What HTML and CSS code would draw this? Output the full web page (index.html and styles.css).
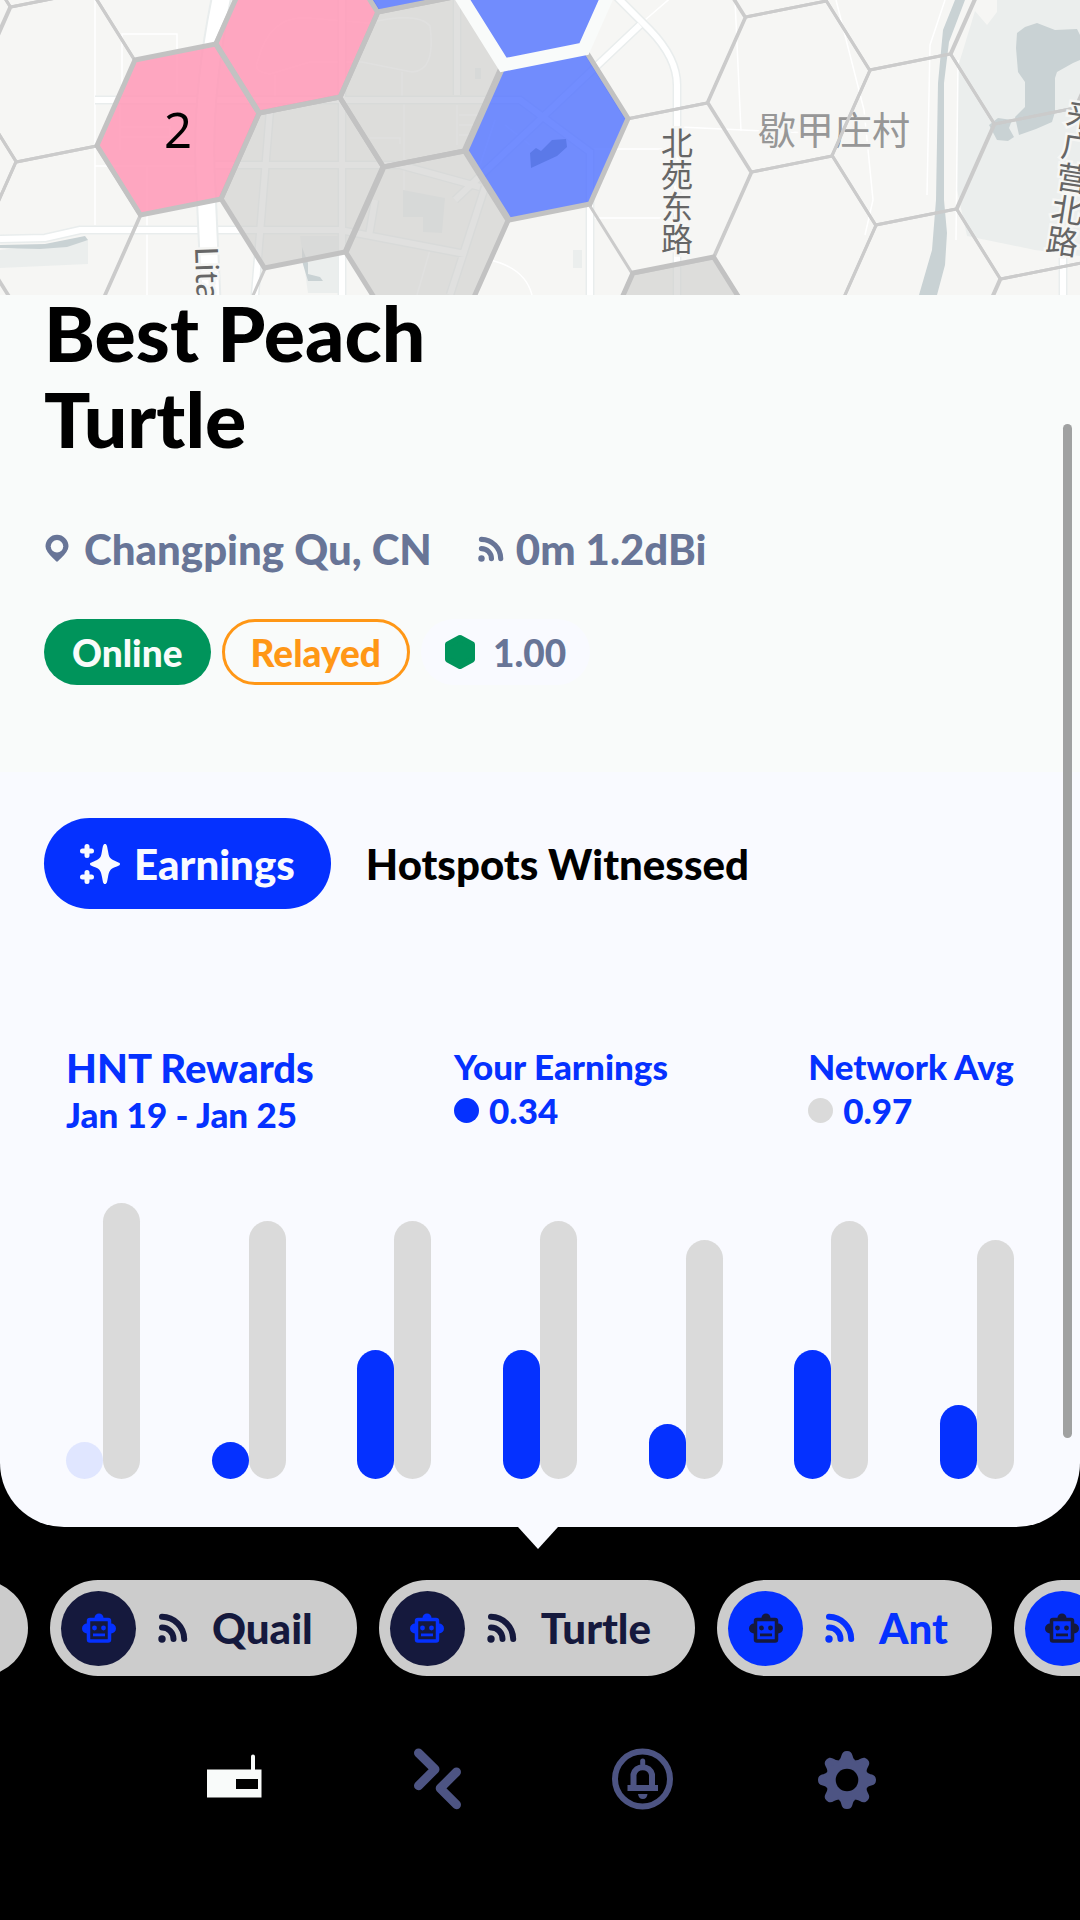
FILE: index.html
```html
<!DOCTYPE html>
<html lang="en">
<head>
  <meta charset="UTF-8">
  <meta name="viewport" content="width=device-width, initial-scale=1.0">
  <title>Best Peach Turtle</title>
  <link rel="stylesheet" href="styles.css">
</head>
<body>
  <svg class="defs" aria-hidden="true">
    <symbol id="rss" viewBox="0 0 30 30">
      <circle cx="4" cy="26" r="3.7" fill="currentColor"/>
      <path d="M4 14.5A11.5 11.5 0 0 1 15.5 26M4 3.8A22.5 22.5 0 0 1 26.2 26" fill="none" stroke="currentColor" stroke-width="6" stroke-linecap="round"/>
    </symbol>
    <symbol id="robot" viewBox="0 0 34 30">
      <path d="M12.500 5a4.500 4.500 0 0 1 9 0zM5 10.500v10a5 5 0 0 1 0-10zM29 10.500v10a5 5 0 0 0 0-10z" fill="currentColor"/>
      <rect x="6.500" y="6.500" width="21" height="21.500" rx="1.500" fill="none" stroke="currentColor" stroke-width="3.500"/>
      <circle cx="12.500" cy="15" r="2.400" fill="currentColor"/>
      <circle cx="21.500" cy="15" r="2.400" fill="currentColor"/>
      <rect x="11" y="20.500" width="12" height="2.800" fill="currentColor"/>
    </symbol>
    <symbol id="plus" viewBox="0 0 14 14">
      <path d="M7 2.500v9M2.500 7h9" stroke="currentColor" stroke-width="5" stroke-linecap="round"/>
    </symbol>
  </svg>

  <svg class="map" viewBox="0 0 1080 295" preserveAspectRatio="xMidYMid slice" role="img" aria-label="Map">
    <defs>
      <path id="hex" d="M-43-70 37.500-86 81-16.500 43 69-37.500 85-81 15.500z"/>
      <path id="tooth" d="M0 0 19.900-8.200C21.500-4.500 29-7 29 0S21.500 4.500 19.900 8.200z"/>
    </defs>

    <!-- parks and water -->
    <path class="park" d="M975 11 987 25 997 12V0h83v256l-45-6-68-14-10-46V70zM0 250l88-10v24L0 268zM300 236h44v57h-36zM573 250h9v18h-9z"/>
    <path class="water" d="M955 0 943 30 938 83 936 200 932 250 919 295H937L945 265 947 233 944 200V83L949 42 965 0z"/>
    <path class="water" d="M1017 33 1025 27 1037 23 1055 30 1077 29 1080 35V60L1073 63 1057 72 1055 78V112L1052 122 1036 129 1019 135 1015 117 1025 107V82L1018 72 1016 48z"/>
    <path class="water" d="M989 125 998 118 1012 120 1009 128 1014 137 1008 141 997 140z"/>
    <path class="water" d="M0 245 45 244 85 236 88 240 67 247 40 249 0 248zM302 247l6 16 0 11 12 3 3 4-15 0-6-20z"/>
    <path class="pond" d="M403 190l42 8-3 35-19-1v-15h-20zM475 68h6v11h-6z"/>

    <!-- small streets -->
    <path class="lane" d="M95 0v225M122 100V34h55v60M95 166h100M147 166v130M120 100v50M735 0l6 131M836 0l28 110 9 90-8 35M945 0l-15 45-3 150M958 60l-2 180M680 127l150 7M594 149h80M590 218h85M645 20l29-25M370 138h30v6M404 100v90M457 105v40M459 115h20M459 125h18M459 135h14M490 260q35 8 42 35M430 250l-13 45M120 127h50v10h-50M258 60q12-45 50-42l60 5q50-12 62 3 6 45-18 46l-50-10-52 0-40 12q-18-2-12-14M275 75v28M402 72v28M495 120l-15 45M505 125l25 20"/>
    <path class="street-edge" d="M0 239 45 238 80 230H340L465 254M95 100H520L590 152V295M208 165H400L480 187M270 110 255 295M342 0v295M375 200l-6 36M457 0v95M485 187 450 295M455 200 640 25M610-10 650 30Q677 58 677 85V295M1063 250v45"/>
    <path class="street" d="M0 239 45 238 80 230H340L465 254M95 100H520L590 152V295M208 165H400L480 187M270 110 255 295M342 0v295M375 200l-6 36M457 0v95M485 187 450 295M455 200 640 25M610-10 650 30Q677 58 677 85V295M1063 250v45"/>
    <path class="avenue-edge" d="M222-5Q200 100 206 190L211 300"/>
    <path class="avenue" d="M222-5Q200 100 206 190L211 300"/>

    <text class="place" x="834" y="144">歇甲庄村</text>

    <g class="cell">
      <use href="#hex" x="-59" y="333"/>
      <use href="#hex" x="-65" y="178"/>
      <use href="#hex" x="-71" y="23"/>
      <use href="#hex" x="59" y="232"/>
      <use href="#hex" x="54" y="77"/>
      <use href="#hex" x="48" y="-78"/>
      <use href="#hex" x="172" y="-25"/>
      <use href="#hex" x="184" y="285"/>
      <use href="#hex" x="664" y="34"/>
      <use href="#hex" x="670" y="189"/>
      <use href="#hex" x="783" y="-68"/>
      <use href="#hex" x="789" y="87"/>
      <use href="#hex" x="795" y="242"/>
      <use href="#hex" x="907" y="-15"/>
      <use href="#hex" x="913" y="140"/>
      <use href="#hex" x="919" y="295"/>
      <use href="#hex" x="1032" y="39"/>
      <use href="#hex" x="1038" y="194"/>
      <use href="#hex" x="1044" y="349"/>
    </g>
    <g class="cell cell-gray">
      <use href="#hex" x="302" y="183"/>
      <use href="#hex" x="421" y="82"/>
      <use href="#hex" x="427" y="237"/>
      <use href="#hex" x="676" y="343"/>
    </g>
    <g class="cell cell-pink">
      <use href="#hex" x="178" y="130"/>
      <use href="#hex" x="297" y="28"/>
    </g>
    <g class="cell cell-blue">
      <use href="#hex" x="415" y="-73"/>
      <use href="#hex" x="547" y="135"/>
      <use class="selected" href="#hex" x="541" y="-20"/>
    </g>
    <path class="pond-blue" d="M530 153 536 148 541 151 552 140 566 139 567 147 557 156 531 168z"/>

    <text class="count" x="178" y="148">2</text>
    <text class="road" x="677" y="127">北苑东路</text>
    <text class="road" transform="translate(1085 99) rotate(9)">来广营北路</text>
    <text class="road-latin" transform="translate(195 247) rotate(88)">Litang</text>
  </svg>

  <main class="sheet">
    <section class="summary">
      <h1 class="name">Best Peach<br>Turtle</h1>
      <div class="meta">
        <span class="meta-item">
          <svg class="pin" viewBox="0 0 24 28"><path d="M12 2a9.500 9.500 0 0 0-9.500 9.500c0 5 5 8.500 9.500 13 4.500-4.500 9.500-8 9.500-13A9.500 9.500 0 0 0 12 2z" fill="currentColor" stroke="currentColor" stroke-width="2.500" stroke-linejoin="round"/><circle class="pin-hole" cx="12" cy="11.500" r="5.800"/></svg>
          Changping Qu, CN
        </span>
        <span class="meta-item meta-antenna">
          <svg class="meta-rss"><use href="#rss"/></svg>
          0m 1.2dBi
        </span>
      </div>
      <div class="badges">
        <span class="badge badge-online">Online</span>
        <span class="badge badge-relayed">Relayed</span>
        <span class="badge badge-scale">
          <svg class="scale-icon" viewBox="0 0 30 34"><path d="M15 3 27 9.500V24.500L15 31 3 24.500V9.500z" fill="currentColor" stroke="currentColor" stroke-width="6" stroke-linejoin="round"/></svg>
          1.00
        </span>
      </div>
    </section>

    <section class="details">
      <div class="tabs">
        <button class="tab active">
          <svg class="sparkle" viewBox="0 0 40 40"><path d="M25 0c2 0 2 2 3 7 1 6 1.500 7 5 9 5 2.500 7 2.500 7 4s-2 2-7 4c-3.500 2-4 4-5 9-1 5-1 7-3 7s-2-2-3-7c-1-5-1.500-7-5-9-5-2-7-2.500-7-4s2-1.500 7-4c3.500-2 4-3 5-9 1-5 1-7 3-7z" fill="currentColor"/><use href="#plus" x="0" y="0" width="14" height="14"/><use href="#plus" x="0" y="26" width="14" height="14"/></svg>
          Earnings
        </button>
        <button class="tab">Hotspots Witnessed</button>
      </div>

      <div class="stats">
        <div class="stat">
          <div class="stat-title">HNT Rewards</div>
          <div class="stat-line">Jan 19 - Jan 25</div>
        </div>
        <div class="stat">
          <div class="stat-line">Your Earnings</div>
          <div class="stat-line"><span class="dot dot-blue"></span>0.34</div>
        </div>
        <div class="stat">
          <div class="stat-line">Network Avg</div>
          <div class="stat-line"><span class="dot"></span>0.97</div>
        </div>
      </div>

      <div class="chart">
        <div class="pair"><div class="bar empty" style="height: 37px"></div><div class="bar avg" style="height: 276px"></div></div>
        <div class="pair"><div class="bar" style="height: 37px"></div><div class="bar avg" style="height: 258px"></div></div>
        <div class="pair"><div class="bar" style="height: 129px"></div><div class="bar avg" style="height: 258px"></div></div>
        <div class="pair"><div class="bar" style="height: 129px"></div><div class="bar avg" style="height: 258px"></div></div>
        <div class="pair"><div class="bar" style="height: 55px"></div><div class="bar avg" style="height: 239px"></div></div>
        <div class="pair"><div class="bar" style="height: 129px"></div><div class="bar avg" style="height: 258px"></div></div>
        <div class="pair"><div class="bar" style="height: 74px"></div><div class="bar avg" style="height: 239px"></div></div>
      </div>
    </section>
    <div class="scroll-thumb"></div>
    <div class="pointer"></div>
  </main>

  <div class="chips">
    <button class="chip chip-prev" aria-label="Previous hotspot"></button>
    <button class="chip">
      <span class="face"><svg class="robot"><use href="#robot"/></svg></span>
      <svg class="chip-rss"><use href="#rss"/></svg>
      Quail
    </button>
    <button class="chip">
      <span class="face"><svg class="robot"><use href="#robot"/></svg></span>
      <svg class="chip-rss"><use href="#rss"/></svg>
      Turtle
    </button>
    <button class="chip chip-blue">
      <span class="face"><svg class="robot"><use href="#robot"/></svg></span>
      <svg class="chip-rss"><use href="#rss"/></svg>
      Ant
    </button>
    <button class="chip chip-blue" aria-label="Next hotspot">
      <span class="face"><svg class="robot"><use href="#robot"/></svg></span>
      <svg class="chip-rss"><use href="#rss"/></svg>
    </button>
  </div>

  <nav class="nav">
    <button class="nav-item active" aria-label="Hotspots">
      <svg viewBox="0 0 64 64"><path d="M6 22.500H50V9.500a2 2 0 0 1 4 0V22.500H60.500V50.500H6zM35 32V42H57V32z" fill="currentColor" fill-rule="evenodd"/></svg>
    </button>
    <button class="nav-item" aria-label="Transfers">
      <svg viewBox="0 0 64 64"><path d="M12.500 6 29 22.300 12.500 38.700M50.500 25 34.200 41.300 50.500 57.700" fill="none" stroke="currentColor" stroke-width="9" stroke-linecap="round" stroke-linejoin="round"/></svg>
    </button>
    <button class="nav-item" aria-label="Notifications">
      <svg viewBox="0 0 64 64"><g fill="none" stroke="currentColor" stroke-width="6"><circle cx="32.500" cy="32" r="27.500"/><path d="M23.500 39V27.500a9.500 9.500 0 0 1 18.500 0V39M17.500 41H48"/><path d="M32.700 14v3" stroke-width="5" stroke-linecap="round"/></g><path d="M28 47h9.500q-.5 5-4.700 5T28 47z" fill="currentColor"/></svg>
    </button>
    <button class="nav-item" aria-label="Settings">
      <svg viewBox="0 0 64 64"><g transform="translate(32 33)" fill="currentColor"><use href="#tooth"/><use href="#tooth" transform="rotate(45)"/><use href="#tooth" transform="rotate(90)"/><use href="#tooth" transform="rotate(135)"/><use href="#tooth" transform="rotate(180)"/><use href="#tooth" transform="rotate(225)"/><use href="#tooth" transform="rotate(270)"/><use href="#tooth" transform="rotate(315)"/><circle r="20.500"/><circle r="11.300" fill="#000"/></g></svg>
    </button>
  </nav>
</body>
</html>
```
FILE: styles.css
```css
* {
  box-sizing: border-box;
}
body {
  margin: 0;
  min-height: 100vh;
  background: #000;
  font-family: Lato, "Noto Sans CJK SC", sans-serif;
  font-weight: 900;
  overflow-x: hidden;
}
button {
  border: 0;
  padding: 0;
  background: none;
  color: inherit;
  font: inherit;
  cursor: pointer;
}
svg {
  display: block;
  flex-shrink: 0;
}
.defs {
  position: absolute;
  width: 0;
  height: 0;
}

/* map */
.map {
  width: 100%;
  height: 295px;
  background: #f6f6f4;
}
.park {
  fill: #ebeeed;
}
.water {
  fill: #c9d2d4;
}
.pond {
  fill: #e6eaea;
}
.pond-blue {
  fill: #5b79e8;
}
.lane, .street, .street-edge, .avenue, .avenue-edge {
  fill: none;
  stroke: #fff;
  stroke-width: 1.5;
}
.street {
  stroke-width: 6;
}
.street-edge {
  stroke: #e9eded;
  stroke-width: 9;
}
.avenue {
  stroke-width: 17;
}
.avenue-edge {
  stroke: #e9eded;
  stroke-width: 21;
}
.cell {
  fill: none;
  stroke: #cbcbcb;
  stroke-width: 3;
}
.cell-gray, .cell-pink, .cell-blue {
  stroke: #c2c2c2;
  stroke-width: 5;
}
.cell-gray {
  fill: rgba(207, 207, 206, 0.65);
}
.cell-pink {
  fill: rgba(255, 152, 182, 0.85);
}
.cell-blue {
  fill: rgba(86, 118, 255, 0.83);
}
.selected {
  stroke: #f9fbfa;
  stroke-width: 13;
}
.count {
  font: 400 49px "Noto Sans", sans-serif;
  text-anchor: middle;
}
.place, .road, .road-latin {
  font-family: "Noto Sans CJK SC", sans-serif;
  font-weight: 400;
  paint-order: stroke;
  stroke: #f6f6f4;
  stroke-width: 5px;
}
.place {
  font-size: 38px;
  fill: #979797;
  text-anchor: middle;
}
.road {
  font-size: 32px;
  fill: #666;
  writing-mode: vertical-rl;
}
.road-latin {
  font-family: "Noto Sans", sans-serif;
  font-size: 32px;
  fill: #666;
}

/* sheet */
.sheet {
  position: relative;
  background: #f9faff;
  border-radius: 0 0 64px 64px;
}
.summary {
  padding: 0 44px 87px;
  background: #f9fbfa;
}
.name {
  margin: 0;
  position: relative;
  top: -6px;
  font-size: 77px;
  line-height: 86px;
  font-weight: 900;
}
.meta {
  display: flex;
  gap: 46px;
  margin-top: 56px;
  color: #687597;
  font-size: 42px;
  line-height: 52px;
}
.meta-item {
  display: flex;
  align-items: center;
  gap: 14px;
}
.meta-antenna {
  gap: 12px;
}
.pin {
  width: 26px;
  height: 30px;
}
.pin-hole {
  fill: #f9fbfa;
}
.meta-rss {
  width: 26px;
  height: 26px;
}
.badges {
  display: flex;
  gap: 11px;
  margin-top: 44px;
}
.badge {
  display: flex;
  align-items: center;
  height: 66px;
  padding: 0 28px;
  border-radius: 33px;
  font-size: 37px;
}
.badge-online {
  background: #00945b;
  color: #f9fbfa;
}
.badge-relayed {
  padding: 0 26px;
  border: 3px solid #ff9716;
  color: #ff9716;
}
.badge-scale {
  gap: 18px;
  padding: 0 24px;
  background: #f9faff;
  color: #687597;
}
.scale-icon {
  width: 30px;
  height: 34px;
  color: #00945b;
}
.details {
  padding: 46px 66px 48px;
}
.tabs {
  display: flex;
  gap: 35px;
  margin-left: -22px;
  font-size: 42px;
}
.tab {
  display: flex;
  align-items: center;
  gap: 14px;
  height: 91px;
}
.tab.active {
  padding: 0 36px;
  border-radius: 46px;
  background: #0531ff;
  color: #f9faff;
}
.sparkle {
  width: 40px;
  height: 40px;
}
.stats {
  display: flex;
  justify-content: space-between;
  margin-top: 135px;
  color: #0531ff;
}
.stat-title {
  font-size: 40px;
  line-height: 48px;
}
.stat-line {
  display: flex;
  align-items: center;
  font-size: 35px;
  line-height: 44px;
}
.dot {
  width: 25px;
  height: 25px;
  margin-right: 10px;
  border-radius: 50%;
  background: #dadada;
}
.dot-blue {
  background: #0531ff;
}
.chart {
  display: flex;
  justify-content: space-between;
  height: 276px;
  margin-top: 67px;
}
.pair {
  display: flex;
  align-items: flex-end;
}
.bar {
  width: 37px;
  border-radius: 19px;
  background: #0531ff;
}
.bar.avg {
  background: #dadada;
}
.bar.empty {
  background: #e0e6ff;
}
.scroll-thumb {
  position: absolute;
  top: 129px;
  right: 8px;
  bottom: 89px;
  width: 9px;
  border-radius: 5px;
  background: #a0a1a1;
}
.pointer {
  position: absolute;
  top: 100%;
  left: 50%;
  margin-left: -22px;
  border: 20px solid transparent;
  border-top: 22px solid #f9faff;
  border-bottom: 0;
}

/* hotspot chips */
.chips {
  display: flex;
  gap: 22px;
  padding-top: 53px;
  overflow: hidden;
}
.chip {
  display: flex;
  flex-shrink: 0;
  align-items: center;
  height: 96px;
  padding: 0 44px 0 11px;
  border-radius: 48px;
  background: #ccc;
  color: #15193d;
  font-size: 42px;
}
.chip-prev {
  width: 272px;
  margin-left: -244px;
}
.face {
  display: flex;
  align-items: center;
  justify-content: center;
  width: 75px;
  height: 75px;
  border-radius: 50%;
  background: #15193d;
  color: #0531ff;
}
.robot {
  width: 34px;
  height: 30px;
}
.chip-rss {
  width: 30px;
  height: 30px;
  margin: 0 24px 0 22px;
}
.chip-blue {
  color: #0531ff;
}
.chip-blue .face {
  background: #0531ff;
  color: #15193d;
}

/* bottom nav */
.nav {
  display: flex;
  padding: 71px 131px 0;
}
.nav-item {
  display: flex;
  flex: 1;
  justify-content: center;
  color: #4d5483;
}
.nav-item.active {
  color: #f9fbfa;
}
.nav svg {
  width: 64px;
  height: 64px;
}
```
